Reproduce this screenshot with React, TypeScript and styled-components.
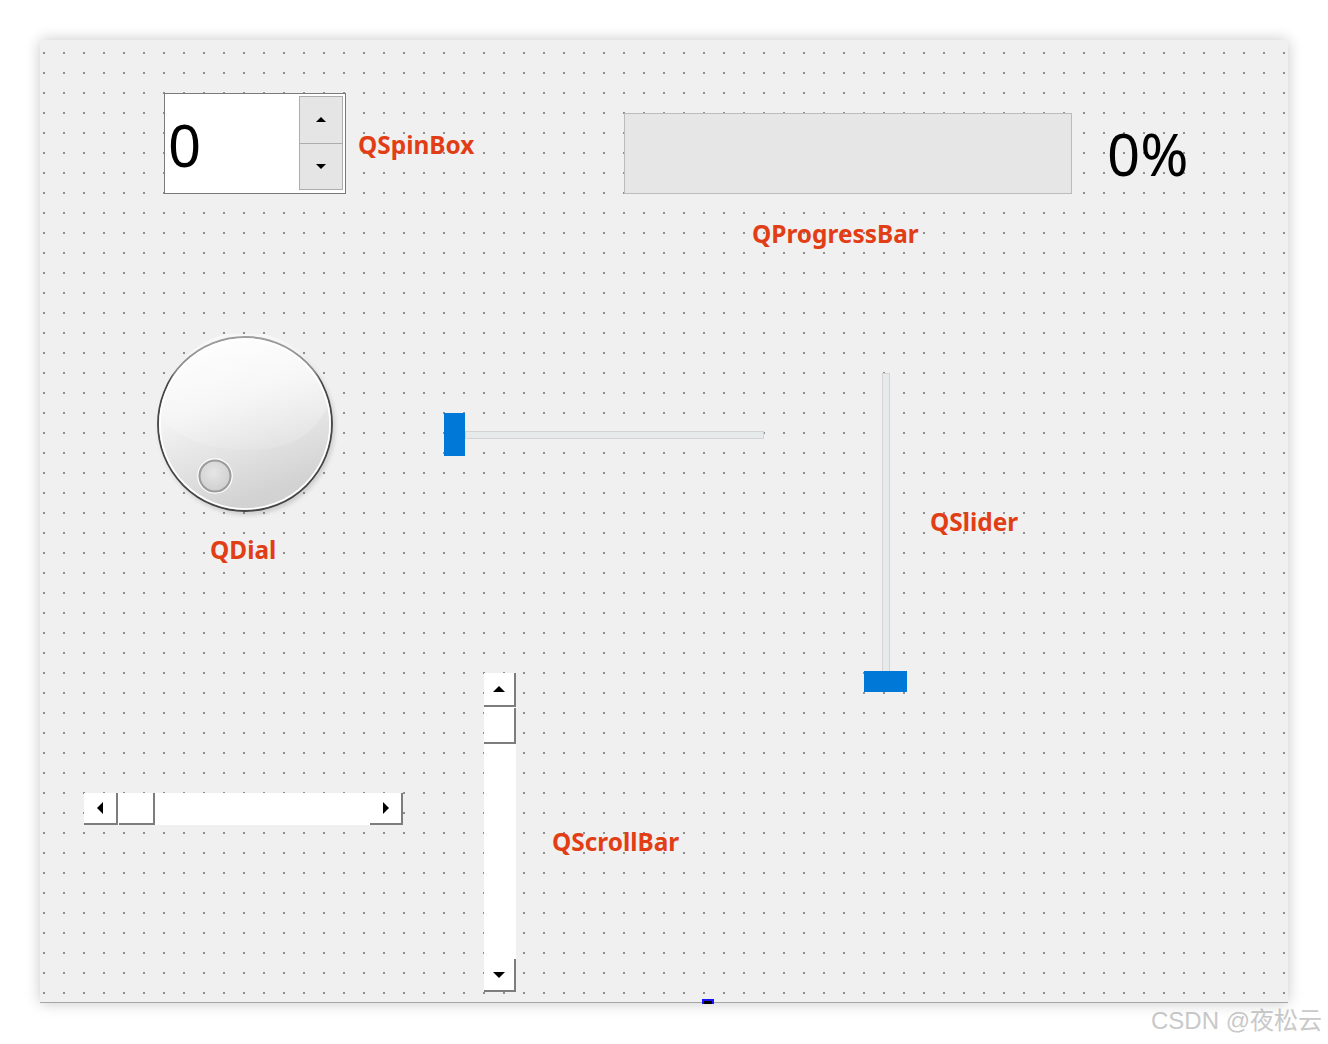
import * as React from 'react';
import styled, { createGlobalStyle } from 'styled-components';

const GlobalStyle = createGlobalStyle`
  html, body {
    margin: 0;
    padding: 0;
    background: #ffffff;
  }
  body {
    font-family: 'Noto Sans', 'Liberation Sans', sans-serif;
  }
`;

const Page = styled.div`
  width: 1328px;
  height: 1044px;
  padding: 40px 0 0 40px;
  box-sizing: border-box;
  display: flex;
  flex-direction: column;
  overflow: hidden;
`;

// Qt Designer form: a free canvas with a dot grid
const Form = styled.div`
  position: relative;
  width: 1248px;
  height: 963px;
  box-sizing: border-box;
  background-color: #f0f0f0;
  background-image: conic-gradient(from 270deg at 2px 2px, #8f8f8f 25%, transparent 0);
  background-size: 20px 20px;
  background-position: 3px 12px;
  border-bottom: 1px solid #a6a6a6;
  box-shadow: 0 0 14px rgba(0, 0, 0, 0.22);
`;

const Placed = styled.div<{ $x: number; $y: number }>`
  position: absolute;
  left: ${(p) => p.$x}px;
  top: ${(p) => p.$y}px;
`;

const Caption = styled(Placed)`
  font-family: 'Noto Sans', 'Liberation Sans', sans-serif;
  font-weight: 700;
  font-size: 24.4px;
  line-height: 24px;
  color: #e23e16;
  white-space: nowrap;
`;

const BigValue = styled(Placed)`
  font-family: 'Noto Sans', 'Liberation Sans', sans-serif;
  font-size: 58px;
  line-height: 58px;
  color: #000;
`;

/* ---------- spin box ---------- */

const SpinFrame = styled(Placed)`
  width: 182px;
  height: 101px;
  box-sizing: border-box;
  border: 1px solid #7a7a7a;
  background: #fff;
  display: flex;
  padding: 2px 2px 3px 0;
`;

const SpinText = styled.div`
  flex: 1;
  display: flex;
  align-items: center;
  padding: 3px 0 0 3px;
  font-size: 58px;
  line-height: 58px;
  color: #000;
`;

const SpinButtons = styled.div`
  width: 42px;
  display: flex;
  flex-direction: column;
  border: 1px solid #adadad;
  background: #e5e5e5;
`;

const SpinButton = styled.div<{ $first?: boolean }>`
  flex: 1;
  display: flex;
  align-items: center;
  justify-content: center;
  border-bottom: ${(p) => (p.$first ? '1px solid #adadad' : 'none')};
`;

const Arrow = styled.div<{ $dir: 'up' | 'down' | 'left' | 'right'; $size: number }>`
  width: 0;
  height: 0;
  border-style: solid;
  border-color: transparent;
  ${(p) => {
    const s = p.$size;
    switch (p.$dir) {
      case 'up':
        return `border-width: 0 ${s}px ${s}px ${s}px; border-bottom-color: #000;`;
      case 'down':
        return `border-width: ${s}px ${s}px 0 ${s}px; border-top-color: #000;`;
      case 'left':
        return `border-width: ${s}px ${s}px ${s}px 0; border-right-color: #000;`;
      default:
        return `border-width: ${s}px 0 ${s}px ${s}px; border-left-color: #000;`;
    }
  }}
`;

/* ---------- progress bar ---------- */

const ProgressTrack = styled(Placed)`
  width: 448px;
  height: 81px;
  box-sizing: border-box;
  background: #e6e6e6;
  border: 1px solid #bcbcbc;
`;

/* ---------- sliders ---------- */

const HSlider = styled(Placed)`
  display: flex;
  align-items: center;
`;

const HHandle = styled.div`
  width: 21px;
  height: 43px;
  background: #0078d7;
`;

const HGroove = styled.div`
  width: 299px;
  height: 8px;
  box-sizing: border-box;
  background: #e7eaea;
  border: 1px solid #d3d3d3;
`;

const VSlider = styled(Placed)`
  display: flex;
  flex-direction: column;
  align-items: center;
  width: 43px;
`;

const VGroove = styled.div`
  width: 8px;
  height: 298px;
  box-sizing: border-box;
  background: #e7eaea;
  border: 1px solid #d3d3d3;
  border-bottom: none;
`;

const VHandle = styled.div`
  width: 43px;
  height: 21px;
  background: #0078d7;
`;

/* ---------- scroll bars ---------- */

const ScrollBar = styled(Placed)<{ $vertical?: boolean }>`
  display: flex;
  flex-direction: ${(p) => (p.$vertical ? 'column' : 'row')};
  width: ${(p) => (p.$vertical ? 32 : 319)}px;
  height: ${(p) => (p.$vertical ? 319 : 32)}px;
  background: #fff;
`;

const ScrollButton = styled.div<{ $len: number; $vertical?: boolean }>`
  ${(p) => (p.$vertical ? `height: ${p.$len}px;` : `width: ${p.$len}px;`)}
  flex-shrink: 0;
  box-sizing: border-box;
  background: #fff;
  border-right: 2px solid #7d7d7d;
  border-bottom: 2px solid #7d7d7d;
  display: flex;
  align-items: center;
  justify-content: center;
`;

const ScrollGap = styled.div`
  flex: 1;
`;

const Spacer = styled.div<{ $size: number }>`
  flex: 0 0 ${(p) => p.$size}px;
`;

const Marker = styled(Placed)`
  width: 12px;
  height: 5px;
  box-sizing: border-box;
  background: #000;
  border: 2px solid #1414ff;
  border-bottom: none;
`;

const Watermark = styled.div`
  align-self: flex-end;
  margin: 4px 6px 0 0;
  font-family: 'Liberation Sans', 'Noto Sans CJK SC', sans-serif;
  font-size: 24px;
  line-height: 28px;
  color: #c9c9c9;
  text-shadow: 0 0 1px #fff;
`;

const Dial = ({ x, y }: { x: number; y: number }) => (
  <Placed $x={x} $y={y}>
    <svg width="184" height="184" viewBox="0 0 184 184">
      <defs>
        <linearGradient id="dialBody" x1="0" y1="0" x2="0.35" y2="1">
          <stop offset="0" stopColor="#ffffff" />
          <stop offset="0.45" stopColor="#f3f3f3" />
          <stop offset="1" stopColor="#d2d2d2" />
        </linearGradient>
        <linearGradient id="dialShine" x1="0" y1="0" x2="0" y2="1">
          <stop offset="0" stopColor="#ffffff" stopOpacity="0.9" />
          <stop offset="1" stopColor="#ffffff" stopOpacity="0.2" />
        </linearGradient>
        <radialGradient id="knob" cx="0.45" cy="0.4" r="0.6">
          <stop offset="0" stopColor="#e6e6e6" />
          <stop offset="1" stopColor="#cfcfcf" />
        </radialGradient>
        <filter id="dialShadow" x="-10%" y="-10%" width="130%" height="130%">
          <feDropShadow dx="2" dy="3" stdDeviation="2" floodColor="#000" floodOpacity="0.14" />
        </filter>
      </defs>
      <circle cx="90" cy="90" r="87" fill="url(#dialBody)" stroke="#454545" strokeWidth="1.8" filter="url(#dialShadow)" />
      <circle cx="90" cy="90" r="85" fill="none" stroke="#ffffff" strokeWidth="1.6" />
      <path d="M8 86 A82 82 0 0 1 172 74 Q 150 118 90 116 Q 34 114 8 86 Z" fill="url(#dialShine)" opacity="0.55" />
      <circle cx="60" cy="142" r="17" fill="none" stroke="#ffffff" strokeWidth="1.5" />
      <circle cx="60" cy="142" r="15.5" fill="url(#knob)" stroke="#9b9b9b" strokeWidth="2" />
    </svg>
  </Placed>
);

export default function App() {
  return (
    <Page>
      <GlobalStyle />
      <Form>
        <SpinFrame $x={124} $y={53}>
          <SpinText>0</SpinText>
          <SpinButtons>
            <SpinButton $first>
              <Arrow $dir="up" $size={5} />
            </SpinButton>
            <SpinButton>
              <Arrow $dir="down" $size={5} />
            </SpinButton>
          </SpinButtons>
        </SpinFrame>
        <Caption $x={318} $y={93}>QSpinBox</Caption>

        <ProgressTrack $x={584} $y={73} />
        <BigValue $x={1067} $y={85}>0%</BigValue>
        <Caption $x={712} $y={182}>QProgressBar</Caption>

        <Dial x={115} y={294} />
        <Caption $x={170} $y={498}>QDial</Caption>

        <HSlider $x={404} $y={373}>
          <HHandle />
          <HGroove />
        </HSlider>

        <VSlider $x={824} $y={333}>
          <VGroove />
          <VHandle />
        </VSlider>
        <Caption $x={890} $y={470}>QSlider</Caption>

        <ScrollBar $x={44} $y={753}>
          <ScrollButton $len={34}>
            <Arrow $dir="left" $size={6} />
          </ScrollButton>
          <Spacer $size={1} />
          <ScrollButton $len={36} />
          <ScrollGap />
          <ScrollButton $len={33}>
            <Arrow $dir="right" $size={6} />
          </ScrollButton>
        </ScrollBar>

        <ScrollBar $vertical $x={444} $y={633}>
          <ScrollButton $vertical $len={34}>
            <Arrow $dir="up" $size={6} />
          </ScrollButton>
          <Spacer $size={1} />
          <ScrollButton $vertical $len={36} />
          <ScrollGap />
          <ScrollButton $vertical $len={33}>
            <Arrow $dir="down" $size={6} />
          </ScrollButton>
        </ScrollBar>
        <Caption $x={512} $y={790}>QScrollBar</Caption>

        <Marker $x={662} $y={959} />
      </Form>
      <Watermark>CSDN @夜松云</Watermark>
    </Page>
  );
}
